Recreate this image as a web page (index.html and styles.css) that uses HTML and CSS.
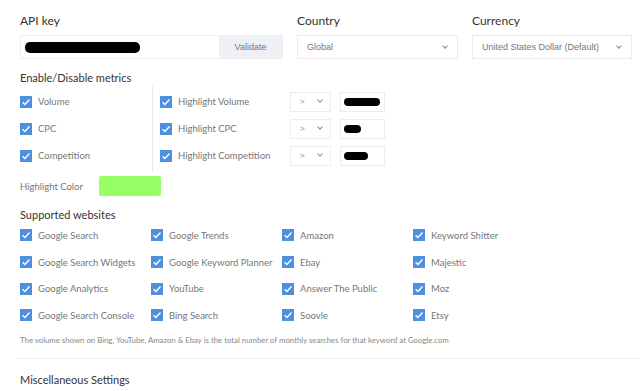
FILE: index.html
```html
<!DOCTYPE html>
<html lang="en">
<head>
  <meta charset="UTF-8">
  <title>Settings</title>
  <link rel="stylesheet" href="styles.css">
</head>
<body>
  <div class="top">
    <div class="field">
      <label class="label">API key</label>
      <div class="api">
        <div class="api-input"><span class="redact redact-api"></span></div>
        <button class="validate">Validate</button>
      </div>
    </div>
    <div class="field">
      <label class="label">Country</label>
      <div class="select"><span>Global</span><span class="caret"></span></div>
    </div>
    <div class="field">
      <label class="label">Currency</label>
      <div class="select"><span>United States Dollar (Default)</span><span class="caret"></span></div>
    </div>
  </div>

  <h2 class="section">Enable/Disable metrics</h2>
  <div class="metrics">
    <div class="metrics-left">
      <div class="row"><span class="check"></span>Volume</div>
      <div class="row"><span class="check"></span>CPC</div>
      <div class="row"><span class="check"></span>Competition</div>
    </div>
    <div class="metrics-right">
      <div class="row">
        <span class="hl-label"><span class="check"></span>Highlight Volume</span>
        <span class="op">&gt;<span class="caret"></span></span>
        <span class="num"><span class="redact" style="width:36px"></span></span>
      </div>
      <div class="row">
        <span class="hl-label"><span class="check"></span>Highlight CPC</span>
        <span class="op">&gt;<span class="caret"></span></span>
        <span class="num"><span class="redact" style="width:17px"></span></span>
      </div>
      <div class="row">
        <span class="hl-label"><span class="check"></span>Highlight Competition</span>
        <span class="op">&gt;<span class="caret"></span></span>
        <span class="num"><span class="redact" style="width:24px"></span></span>
      </div>
    </div>
  </div>

  <div class="color-row">
    <span class="color-label">Highlight Color</span>
    <span class="swatch"></span>
  </div>

  <h2 class="section">Supported websites</h2>
  <div class="sites">
    <div class="row"><span class="check"></span>Google Search</div>
    <div class="row"><span class="check"></span>Google Trends</div>
    <div class="row"><span class="check"></span>Amazon</div>
    <div class="row"><span class="check"></span>Keyword Shitter</div>
    <div class="row"><span class="check"></span>Google Search Widgets</div>
    <div class="row"><span class="check"></span>Google Keyword Planner</div>
    <div class="row"><span class="check"></span>Ebay</div>
    <div class="row"><span class="check"></span>Majestic</div>
    <div class="row"><span class="check"></span>Google Analytics</div>
    <div class="row"><span class="check"></span>YouTube</div>
    <div class="row"><span class="check"></span>Answer The Public</div>
    <div class="row"><span class="check"></span>Moz</div>
    <div class="row"><span class="check"></span>Google Search Console</div>
    <div class="row"><span class="check"></span>Bing Search</div>
    <div class="row"><span class="check"></span>Soovle</div>
    <div class="row"><span class="check"></span>Etsy</div>
  </div>

  <p class="note">The volume shown on Bing, YouTube, Amazon &amp; Ebay is the total number of monthly searches for that keyword at Google.com</p>
  <hr class="divider">
  <h2 class="section misc">Miscellaneous Settings</h2>
</body>
</html>
```

FILE: styles.css
```css
body {
  margin: 0;
  padding: 0 8px 0 20px;
  font-family: Lato, "Open Sans", sans-serif;
  color: #333;
  background: #fff;
}
.top {
  display: grid;
  grid-template-columns: 263px 161px 160px;
  column-gap: 14px;
  padding-top: 13px;
}
.label {
  display: block;
  font-size: 12px;
  color: #333;
  height: 22px;
}
.api {
  display: flex;
  height: 24px;
  border: 1px solid #eee;
  box-sizing: border-box;
}
.api-input {
  flex: 1;
  display: flex;
  align-items: center;
  padding-left: 4px;
}
.redact {
  display: inline-block;
  height: 8px;
  background: #000;
  border-radius: 5px;
}
.redact-api {
  width: 115px;
  height: 11px;
}
.validate {
  width: 63px;
  border: none;
  background: #eef0f6;
  color: #777;
  font-family: "Liberation Sans", Arial, sans-serif;
  font-size: 9px;
  padding: 0;
}
.select {
  display: flex;
  align-items: center;
  justify-content: space-between;
  height: 24px;
  box-sizing: border-box;
  border: 1px solid #f0e8ea;
  padding: 0 10px 0 9px;
  font-family: "Liberation Sans", Arial, sans-serif;
  font-size: 9px;
  color: #777;
}
.caret {
  width: 3px;
  height: 3px;
  border-right: 1px solid #888;
  border-bottom: 1px solid #888;
  transform: rotate(45deg);
  margin-top: -3px;
}
.section {
  font-size: 11px;
  font-weight: normal;
  color: #333;
  margin: 0;
}
.top + .section {
  margin-top: 12px;
  height: 15px;
}
.metrics {
  display: flex;
}
.row {
  display: flex;
  align-items: center;
  height: 27px;
  font-size: 9.5px;
  color: #777;
}
.check {
  width: 12px;
  height: 12px;
  background: #4e8fe0 url("data:image/svg+xml,%3Csvg xmlns='http://www.w3.org/2000/svg' viewBox='0 0 12 12'%3E%3Cpath d='M2.6 6.2l2.3 2.3 4.6-5' fill='none' stroke='%23fff' stroke-width='1.4'/%3E%3C/svg%3E") center/12px 12px no-repeat;
  margin-right: 6px;
  flex: none;
}
.metrics-left {
  width: 132px;
  border-right: 1px solid #e8e8e8;
  padding-top: 2px;
  padding-bottom: 3px;
}
.metrics-right {
  padding-left: 7px;
  padding-top: 2px;
}
.hl-label {
  display: flex;
  align-items: center;
  width: 130px;
}
.op {
  display: flex;
  align-items: center;
  justify-content: space-between;
  width: 41px;
  height: 20px;
  box-sizing: border-box;
  border: 1px solid #f0eaec;
  padding: 0 8px 0 9px;
  font-family: "Liberation Sans", Arial, sans-serif;
  font-size: 8px;
  color: #888;
}
.num {
  display: flex;
  align-items: center;
  width: 45px;
  height: 20px;
  box-sizing: border-box;
  border: 1px solid #f0eaec;
  margin-left: 9px;
  padding-left: 3px;
}
.color-row {
  display: flex;
  align-items: center;
  margin-top: 4px;
  height: 20px;
}
.color-label {
  width: 79px;
  font-size: 9.5px;
  color: #777;
}
.swatch {
  width: 62px;
  height: 20px;
  background: #99ff66;
  border-radius: 2px;
}
.color-row + .section {
  margin-top: 12px;
  height: 14px;
}
.sites {
  display: grid;
  grid-template-columns: repeat(4, 131px);
}
.sites .row {
  height: 26.7px;
}
.note {
  font-size: 7.8px;
  color: #888;
  margin: 6px 0 0;
}
.divider {
  border: none;
  border-top: 1px solid #eee;
  margin: 13px -8px 0 -4px;
}
.misc {
  margin-top: 14px;
}
```
